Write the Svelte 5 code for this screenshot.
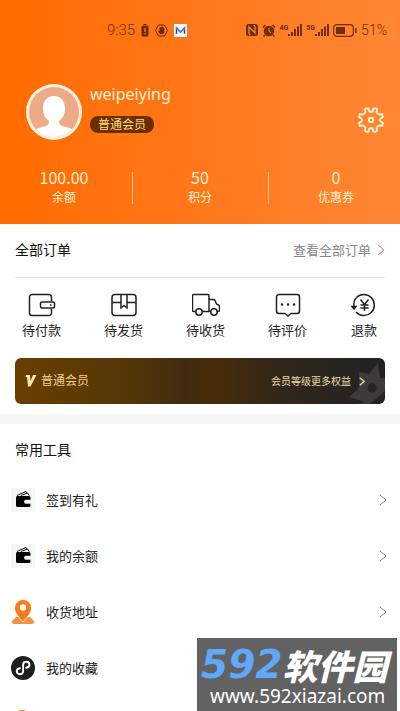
<script>
  const stats = [
    { value: '100.00', label: '余额' },
    { value: '50', label: '积分' },
    { value: '0', label: '优惠券' }
  ];
  const orders = [
    { id: 'pay', label: '待付款' },
    { id: 'ship', label: '待发货' },
    { id: 'receive', label: '待收货' },
    { id: 'review', label: '待评价' },
    { id: 'refund', label: '退款' }
  ];
  const tools = [
    { icon: 'wallet', label: '签到有礼' },
    { icon: 'wallet', label: '我的余额' },
    { icon: 'pin', label: '收货地址' },
    { icon: 'mini', label: '我的收藏' },
    { icon: 'dot', label: '' }
  ];
</script>

{#snippet chevron()}
  <svg class="chevron" viewBox="0 0 8 12" aria-hidden="true"><path d="M1 1l6 5-6 5" /></svg>
{/snippet}

<div class="page">
  <header>
    <div class="status">
      <div class="status-left">
        <span class="time">9:35</span>
        <svg width="8" height="13" viewBox="0 0 8 13" fill="#6b2a00"><path d="M2.500 0h3v1h-3zM2 1.500h4a1.500 1.500 0 0 1 1.500 1.500v8a1.500 1.500 0 0 1-1.500 1.500H2A1.500 1.500 0 0 1 .5 11V3A1.500 1.500 0 0 1 2 1.500z" /><path d="M3.300 4h1.400v4H3.300zM3.300 9h1.400v1.300H3.300z" fill="#f47b23" /></svg>
        <svg width="13" height="13" viewBox="0 0 13 13"><path d="M3.500 1h6l3 5.500-3 5.500h-6l-3-5.500z" fill="none" stroke="#6b2a00" /><path d="M3.500 6.500l1 .5V4h1V3h1v-.5h1V3h1v1h.8v4.500L8.300 10H5.200L3.300 8z" fill="#6b2a00" /></svg>
        <svg width="13" height="13" viewBox="0 0 13 13"><path fill="#f5f8fc" d="M0 0h13v13H0z" /><path d="M2.500 10V4l4 4 4-4v6" fill="none" stroke="#4676b8" stroke-width="1.600" /><path d="M2.500 9V6M10.500 9V6" stroke="#253d73" /></svg>
      </div>
      <div class="status-right">
        <svg width="12" height="12" viewBox="0 0 12 12"><rect width="12" height="12" rx="2.500" fill="#702f05" /><path d="M3 10V3l6 6V2M4.500 10.500H3M9 1.500H7.500" fill="none" stroke="#ff8b3c" stroke-width="1.200" /></svg>
        <svg width="14" height="13" viewBox="0 0 14 13"><circle cx="7" cy="7" r="5.300" fill="#702f05" /><path d="M1 3.500L3.500 1M13 3.500L10.500 1M3 11l-1.500 1.500M11 11l1.500 1.500" stroke="#702f05" stroke-width="1.500" /><path d="M7 4v3.300l2 1.500" fill="none" stroke="#ff8b3c" /></svg>
        <div class="signal">
          <span>4G</span>
          <svg width="14" height="12" viewBox="0 0 14 12" fill="#702f05"><path d="M0 10h2v2H0zM3 8h2v4H3zM6 5h2v7H6zM9 2.500h2V12H9zM12 0h2v12h-2z" /></svg>
        </div>
        <div class="signal">
          <span>5G</span>
          <svg width="14" height="12" viewBox="0 0 14 12" fill="#702f05"><path d="M0 10h2v2H0zM3 8h2v4H3zM6 5h2v7H6zM9 2.500h2V12H9zM12 0h2v12h-2z" /></svg>
        </div>
        <svg width="24" height="13" viewBox="0 0 24 13"><rect x=".7" y=".7" width="19.600" height="11.600" rx="3" fill="none" stroke="#702f05" stroke-width="1.200" /><path d="M3 3h9v7H3zM22 4h1.500v5H22z" fill="#702f05" /></svg>
        <span class="percent">51%</span>
      </div>
    </div>

    <div class="profile">
      <svg class="avatar" viewBox="0 0 56 56" aria-hidden="true">
        <defs><clipPath id="face"><circle cx="28" cy="28" r="25" /></clipPath></defs>
        <circle cx="28" cy="28" r="28" fill="#fff1dc" />
        <circle cx="28" cy="28" r="25" fill="#edaa86" />
        <g clip-path="url(#face)" fill="#fff"><path d="M28 12c7 0 11 5 11 12 0 6-2 10-6 13 0 4 2 5 7 6 5 1 8 3 10 6v8H6v-8c2-3 5-5 10-6 5-1 7-2 7-6-4-3-6-7-6-13 0-7 4-12 11-12z" /></g>
      </svg>
      <div class="who">
        <div class="name">weipeiying</div>
        <span class="badge">普通会员</span>
      </div>
      <button class="settings" aria-label="设置">
        <svg width="26" height="26" viewBox="0 0 26 26" fill="none" stroke="#fff3d0" stroke-width="1.900" stroke-linejoin="round"><path d="M7.700 1.500 L10.700 1.500 L11.300 4.400 Q13 5.600 14.700 4.400 L15.300 1.500 L18.300 1.500 L19.300 2.500 L18.500 5 Q19.300 7.200 21.400 7.600 L24 7 L25 10 L22.600 11.500 Q21.500 13 22.600 14.500 L25 16 L24 19 L21.400 18.400 Q19.300 18.800 18.500 21 L19.300 23.500 L17.300 25 L15.300 24.500 L14.700 21.600 Q13 20.400 11.300 21.600 L10.700 24.500 L8.700 25 L6.700 23.500 L7.500 21 Q6.700 18.800 4.600 18.400 L2 19 L1 16 L3.400 14.500 Q4.500 13 3.400 11.500 L1 10 L2 7 L4.600 7.600 Q6.700 7.200 7.500 5 L6.700 2.500 Z" /><circle cx="13" cy="13" r="2.200" /></svg>
      </button>
    </div>

    <div class="stats">
      {#each stats as s}
        <div class="stat"><span class="value">{s.value}</span><span class="label">{s.label}</span></div>
      {/each}
    </div>
  </header>

  <main>
    <section class="orders">
      <div class="heading">
        <h2>全部订单</h2>
        <a href="#orders">查看全部订单 {@render chevron()}</a>
      </div>
      <nav>
        {#each orders as o}
          <a href="#{o.id}">
            <svg class="line" width="28" height="24" viewBox="0 0 28 24" aria-hidden="true">
              {#if o.id === 'pay'}
                <path d="M23.500 8V4a2.500 2.500 0 0 0-2.500-2.500H4A2.500 2.500 0 0 0 1.500 4v16A2.500 2.500 0 0 0 4 22.500h17a2.500 2.500 0 0 0 2.500-2.500v-4" /><rect x="12.500" y="9" width="14" height="6" rx="1.500" /><path d="M22 12h1.500" />
              {:else if o.id === 'ship'}
                <rect x="2" y="1.500" width="24" height="21" rx="3" /><path d="M2 9.500h9M17 9.500h9M11 2v13l3-2.500 3 2.500V2" />
              {:else if o.id === 'receive'}
                <path d="M4 18.500H1.500a1 1 0 0 1-1-1V2.500a1 1 0 0 1 1-1H16a1 1 0 0 1 1 1v16H10M17 6.500h4.500q1 0 1.500 1l1.500 3.500 2 1q1 .5 1 1.500v4q0 1-1 1H25M19 18.500h-2" /><circle cx="7" cy="19" r="3.200" /><circle cx="22" cy="19" r="3.200" />
              {:else if o.id === 'review'}
                <path d="M5 1.500h18A2.500 2.500 0 0 1 25.500 4v14a2.500 2.500 0 0 1-2.500 2.500h-6L14 23l-3-2.500H5A2.500 2.500 0 0 1 2.500 18V4A2.500 2.500 0 0 1 5 1.500z" /><path class="dots" d="M8 11.500h.1M14 11.500h.1M20 11.500h.1" />
              {:else}
                <path d="M6.500 4.500A10.500 10.500 0 1 1 6 19" /><path d="M6.500 4.500A10.500 10.500 0 0 0 4 13.500" /><path d="M2 13.500l2 2.500 2-2.500z" fill="#222" /><path d="M10.500 6.500l4 5 4-5M14.500 11v7M10.500 12h8M10.500 15h8" />
              {/if}
            </svg>
            <span>{o.label}</span>
          </a>
        {/each}
      </nav>
      <a class="banner" href="#member">
        <svg class="crown" viewBox="0 0 38 46" aria-hidden="true"><path fill="#3d3a38" d="M12 14l10 2 9-11 2 15h5v13L23 46H10L18 44 2 39l10-9z" /><circle cx="25" cy="30" r="4.500" fill="#252423" /><path d="M22 47q11-2 16-13" fill="none" stroke="#252423" stroke-width="2" /></svg>
        <svg width="12" height="12" viewBox="0 0 12 12" aria-hidden="true"><path d="M1 0l-.5 2H2l1 9.500h2.500L11.500 0H8L5.500 6 5 0z" fill="#ffe5a8" /></svg>
        <span class="level">普通会员</span>
        <span class="more">会员等级更多权益</span>
        {@render chevron()}
      </a>
    </section>

    <section class="tools">
      <h2>常用工具</h2>
      <ul>
        {#each tools as t}
          <li>
            <a href="#tool" aria-label={t.label || '更多'}>
              <svg width="24" height="28" viewBox="0 0 24 28" aria-hidden="true">
                {#if t.icon === 'wallet'}
                  <path fill="#f6f6f6" d="M0 2h24v24H0z" /><path d="M6 10h12a1.500 1.500 0 0 1 1.500 1.500v2.300H15a2 2 0 0 0 0 4h4.500v1.700A1.500 1.500 0 0 1 18 21H6.500A1.500 1.500 0 0 1 5 19.500V11z" fill="#000" /><path d="M6 9.500l9-4 1 1.500M10 9.500l6.500-2.500 1.500 2.500" fill="none" stroke="#111" stroke-width="1" /><path d="M15 14.800h4.500v2H15a1 1 0 0 1 0-2z" fill="#fff" />
                {:else if t.icon === 'pin'}
                  <path d="M5 19h14l4 4c1 2-1 3-3 3H4c-2 0-4-1-3-3z" fill="#ef9447" /><path d="M12 1.500a8.500 8.500 0 0 1 8.500 8.500c0 5-4.500 9.500-8.500 14-4-4.500-8.500-9-8.500-14A8.500 8.500 0 0 1 12 1.500z" fill="#f57c18" stroke="#fff" stroke-width=".8" /><circle cx="12" cy="9.500" r="3.200" fill="#fff" />
                {:else if t.icon === 'mini'}
                  <circle cx="12" cy="14" r="12" fill="#1e1e1e" /><path d="M9 14.200c-2 .3-3.300 1.500-3.300 3 0 1.700 1.500 3 3.200 3 1.800 0 3.200-1.400 3.200-3.200V11c0-1.800 1.300-3.200 3.100-3.200s3.200 1.300 3.200 3c0 1.600-1.300 2.700-3.200 3" fill="none" stroke="#fff" stroke-width="1.900" stroke-linecap="round" />
                {:else}
                  <circle cx="11" cy="11" r="11" fill="#f28a35" />
                {/if}
              </svg>
              <span>{t.label}</span>
              {@render chevron()}
            </a>
          </li>
        {/each}
      </ul>
    </section>
  </main>

  <aside class="watermark">
    <div class="brand"><b>592</b><strong>软件园</strong></div>
    <div class="site">www.592xiazai.com</div>
  </aside>
</div>

<style>
  :global(body) { margin: 0; }
  * { box-sizing: border-box; }
  .page {
    height: 100vh;
    overflow: hidden;
    background: #fff;
    color: #222;
    font-family: "Noto Sans", "Noto Sans CJK SC", sans-serif;
    font-size: 13px;
    line-height: 20px;
  }
  svg { display: block; flex: none; }
  a { color: inherit; text-decoration: none; }
  h2 { margin: 0; font-size: 14px; font-weight: 400; line-height: 20px; color: #111; }
  .chevron { width: 8px; height: 12px; fill: none; stroke: currentColor; stroke-width: 1; }

  header {
    padding-top: 20px;
    padding-bottom: 16px;
    background: linear-gradient(90deg, #ff6c00, #ff7618 45%, #ff8735);
    color: #fff0cc;
  }
  .status {
    display: flex;
    justify-content: space-between;
    padding: 0 13px 0 107px;
    color: #702f05;
    font-family: Roboto, sans-serif;
    font-weight: 300;
  }
  .status-left, .status-right { display: flex; align-items: center; }
  .status-left { gap: 6px; }
  .status-right { gap: 4px; }
  .time { font-size: 15px; }
  .percent { font-size: 14px; }
  .signal { display: flex; align-items: center; }
  .signal span { font-size: 7px; line-height: 12px; font-weight: 700; height: 16px; }

  .profile { display: flex; align-items: center; padding: 44px 16px 0 26px; }
  .avatar { width: 56px; height: 56px; }
  .who { flex: 1; padding-left: 8px; align-self: flex-start; }
  .name { font-size: 16px; line-height: 20px; }
  .badge {
    display: block;
    width: max-content;
    margin-top: 12px;
    padding: 0 8px;
    border-radius: 8px;
    background: #6a2f00;
    color: #ffdc7c;
    font-size: 12px;
    line-height: 17px;
  }
  .settings { padding: 0; margin-top: 16px; border: 0; background: none; }

  .stats { display: grid; grid-template-columns: repeat(3, 1fr); margin: 28px -4px 0; }
  .stat {
    display: flex;
    flex-direction: column;
    align-items: center;
    position: relative;
    font-family: "Noto Sans CJK SC", sans-serif;
  }
  .stat + .stat::before { content: ""; position: absolute; left: 0; top: 4px; bottom: 4px; width: 1px; background: #ffc78c; }
  .value { font-size: 16px; line-height: 18px; }
  .label { font-size: 12px; line-height: 22px; }

  .orders { padding: 0 15px 10px; border-bottom: 10px solid #f5f5f5; }
  .heading {
    display: flex;
    align-items: center;
    justify-content: space-between;
    height: 54px;
    padding-bottom: 2px;
    border-bottom: 1px solid #e6e6e6;
  }
  .heading a { display: flex; align-items: center; gap: 6px; color: #888; }
  nav { display: flex; justify-content: space-between; padding: 15px 7px 18px; }
  nav a { display: flex; flex-direction: column; align-items: center; gap: 3px; }
  .line { fill: none; stroke: #222; stroke-width: 1.5; }
  .dots { stroke-width: 2.4; stroke-linecap: round; }
  .banner {
    display: flex;
    align-items: center;
    position: relative;
    height: 46px;
    padding: 0 20px 0 10px;
    overflow: hidden;
    border-radius: 6px;
    background: linear-gradient(90deg, #6a3e00, #553707 30%, #412b10 46%, #482c08 54%, #30271b 72%, #222);
    color: #f0cf91;
  }
  .crown { position: absolute; right: 0; top: 0; width: 38px; height: 46px; }
  .level { padding-left: 4px; font-size: 12px; flex: 1; }
  .more { padding-right: 8px; font-size: 10px; color: #eed9a5; }
  .banner .chevron { position: relative; stroke-width: 2; width: 6px; height: 9px; }

  .tools { padding-top: 16px; }
  .tools h2 { padding: 0 15px; }
  ul { margin: 12px 0 0; padding: 0; list-style: none; }
  li a { display: flex; align-items: center; height: 56px; padding: 0 13px 0 11px; }
  li span { flex: 1; padding-left: 11px; }
  li .chevron { color: #888; }

  .watermark {
    position: fixed;
    right: 3px;
    bottom: 0;
    width: 200px;
    height: 73px;
    padding: 8px 0 0 4px;
    background: #626262;
    color: #fff;
    white-space: nowrap;
  }
  .brand { display: flex; align-items: center; height: 38px; font-style: italic; }
  .brand b { color: #60a8fa; font: italic 700 39px/38px "DejaVu Sans", sans-serif; }
  .brand strong { font: italic 900 35px/38px "Noto Sans CJK SC", sans-serif; }
  .site { padding-left: 9px; font-size: 19px; line-height: 24px; }
</style>
